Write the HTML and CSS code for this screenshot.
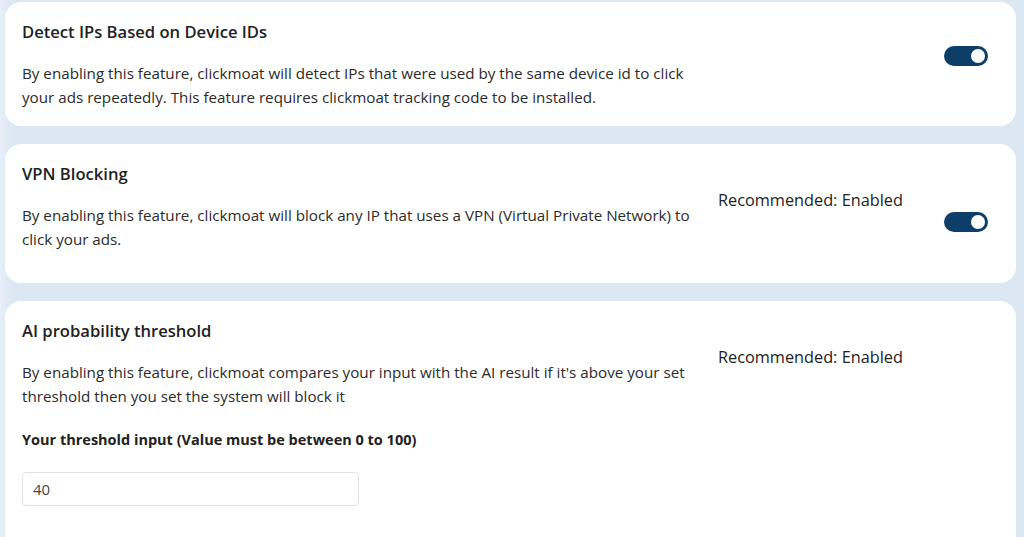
FILE: index.html
```html
<!DOCTYPE html>
<html lang="en">
<head>
<meta charset="utf-8">
<title>Settings</title>
<link rel="stylesheet" href="styles.css">
</head>
<body>
<div class="page">
  <section class="card card-1">
    <div class="main">
      <h3 class="title">Detect IPs Based on Device IDs</h3>
      <p class="desc">By enabling this feature, clickmoat will detect IPs that were used by the same device id to click your ads repeatedly. This feature requires clickmoat tracking code to be installed.</p>
    </div>
    <div class="side">
      <div class="switch-wrap"><span class="switch on"><span class="knob"></span></span></div>
    </div>
  </section>

  <section class="card card-2">
    <div class="main">
      <h3 class="title">VPN Blocking</h3>
      <p class="desc">By enabling this feature, clickmoat will block any IP that uses a VPN (Virtual Private Network) to click your ads.</p>
    </div>
    <div class="side">
      <div class="rec">Recommended: Enabled</div>
      <div class="switch-wrap"><span class="switch on"><span class="knob"></span></span></div>
    </div>
  </section>

  <section class="card card-3">
    <div class="main">
      <h3 class="title">AI probability threshold</h3>
      <p class="desc">By enabling this feature, clickmoat compares your input with the AI result if it's above your set threshold then you set the system will block it</p>
      <label class="label" for="thr">Your threshold input (Value must be between 0 to 100)</label>
      <input class="input" id="thr" type="text" value="40">
    </div>
    <div class="side">
      <div class="rec">Recommended: Enabled</div>
    </div>
  </section>
</div>
</body>
</html>
```

FILE: styles.css
```css
* { box-sizing: border-box; }
html, body { margin: 0; padding: 0; }
body {
  background: linear-gradient(90deg, #e6eef8 0px, #dbe7f3 12px, #dbe7f3 100%);
  font-family: "Open Sans", "Liberation Sans", sans-serif;
  color: #222;
  height: 537px;
  overflow: hidden;
}
.page {
  padding: 2px 8px 0 5px;
  display: flex;
  flex-direction: column;
  gap: 18px;
}
.card {
  background: #fff;
  border-radius: 16px;
  padding: 18px 17px 17px 17px;
  display: flex;
  gap: 4px;
}
.card-2 { min-height: 139px; }
.card-3 { min-height: 260px; }
.main { flex: 0 0 692px; }
.side { flex: 1; display: flex; flex-direction: column; align-items: stretch; padding-top: 26px; }
.title {
  margin: 0 0 17px 0;
  font-size: 16.6px;
  line-height: 24px;
  font-weight: 600;
  color: #222;
}
.desc {
  margin: 0;
  font-size: 15.2px;
  line-height: 24px;
  color: #2b2b2b;
}
.rec {
  font-size: 16.3px;
  line-height: 24px;
  font-weight: 500;
  color: #222;
}
.switch-wrap {
  display: flex;
  justify-content: flex-end;
  padding-right: 11px;
  height: 54px;
}
.switch {
  width: 44px;
  height: 20px;
  border-radius: 10px;
  background: #0d3e68;
  position: relative;
  display: block;
}
.knob {
  position: absolute;
  right: 3px;
  top: 3px;
  width: 14px;
  height: 14px;
  border-radius: 50%;
  background: #fff;
}
.label {
  display: block;
  margin-top: 20px;
  font-size: 14.5px;
  line-height: 24px;
  font-weight: 700;
  color: #222;
}
.input {
  display: block;
  margin-top: 20px;
  width: 337px;
  height: 34px;
  border: 1px solid #dfe2e6;
  border-radius: 4px;
  padding: 0 10px;
  font-family: "Open Sans", "Liberation Sans", sans-serif;
  font-size: 15px;
  color: #444;
  background: #fff;
}
```
